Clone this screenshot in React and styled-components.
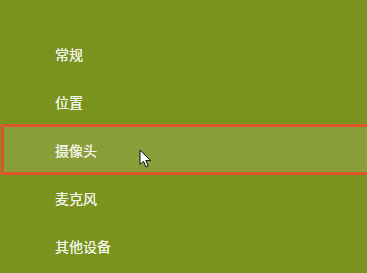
import styled, { createGlobalStyle } from 'styled-components';

const GlobalStyle = createGlobalStyle`
  html, body {
    margin: 0;
    padding: 0;
    background: #7a921e;
  }
  body {
    font-family: "Noto Sans CJK SC", "Noto Sans", sans-serif;
  }
`;

const Page = styled.div`
  width: 367px;
  height: 273px;
  overflow: hidden;
  background: #7a921e;
  padding-top: 30px;
  box-sizing: border-box;
`;

const Menu = styled.ul`
  list-style: none;
  margin: 0;
  padding: 0;
  display: flex;
  flex-direction: column;
`;

const Item = styled.li`
  position: relative;
  display: flex;
  align-items: center;
  box-sizing: border-box;
  height: ${p => (p.$active ? '51px' : '48px')};
  margin: ${p => (p.$active ? '-2px 0 -1px 1px' : '0')};
  width: ${p => (p.$active ? 'calc(100% + 10px)' : '100%')};
  padding-left: ${p => (p.$active ? '51px' : '55px')};
  background: ${p => (p.$active ? '#899d39' : 'transparent')};
  border: ${p => (p.$active ? '3px solid #dc552c' : 'none')};
  color: #f4f4ea;
  font-size: 14px;
  line-height: 1;
  text-shadow: 0 0 0.4px #f4f4ea;
`;

const Cursor = styled.svg`
  position: absolute;
  left: 135px;
  top: 22px;
  width: 13px;
  height: 20px;
`;

const items = ['常规', '位置', '摄像头', '麦克风', '其他设备'];

export default function App() {
  return (
    <Page>
      <GlobalStyle />
      <Menu>
        {items.map(label => (
          <Item key={label} $active={label === '摄像头'}>
            {label}
            {label === '摄像头' && (
              <Cursor viewBox="0 0 13 20">
                <path
                  d="M1 1 L1 15.5 L4.5 12.3 L7 18 L9.2 17 L6.8 11.6 L11.5 11.6 Z"
                  fill="#fff"
                  stroke="#111"
                  strokeWidth="1"
                  strokeLinejoin="round"
                />
              </Cursor>
            )}
          </Item>
        ))}
      </Menu>
    </Page>
  );
}
